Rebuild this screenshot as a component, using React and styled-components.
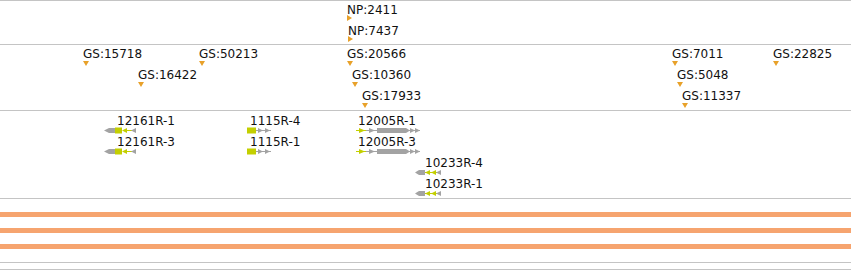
import React from 'react';
import styled, { createGlobalStyle } from 'styled-components';

const GlobalStyle = createGlobalStyle`
    html, body {
        margin: 0;
        padding: 0;
        background: #ffffff;
    }
    body {
        font-family: "DejaVu Sans", "Liberation Sans", sans-serif;
        font-size: 12px;
        color: #111111;
    }
`;

const GRAY = '#a3a3a3';
const GREEN = '#c3cf00';
const MARK = '#e8a12a';

// track tops (y of the border line) so feature coordinates can be read straight off the screen
const trackTop = { np: 0, gs: 44, gene: 110 };

const npFeatures = [
    { label: 'NP:2411', x: 347, y: 3 },
    { label: 'NP:7437', x: 348, y: 24 },
];

const gsFeatures = [
    { label: 'GS:15718', x: 83, y: 47 },
    { label: 'GS:50213', x: 199, y: 47 },
    { label: 'GS:20566', x: 347, y: 47 },
    { label: 'GS:7011', x: 672, y: 47 },
    { label: 'GS:22825', x: 773, y: 47 },
    { label: 'GS:16422', x: 138, y: 68 },
    { label: 'GS:10360', x: 352, y: 68 },
    { label: 'GS:5048', x: 677, y: 68 },
    { label: 'GS:17933', x: 362, y: 89 },
    { label: 'GS:11337', x: 682, y: 89 },
];

const genes = [
    { label: '12161R-1', x: 104, textX: 117, y: 114, kind: 'a' },
    { label: '12161R-3', x: 104, textX: 117, y: 135, kind: 'a' },
    { label: '1115R-4', x: 247, textX: 250, y: 114, kind: 'b' },
    { label: '1115R-1', x: 247, textX: 250, y: 135, kind: 'b' },
    { label: '12005R-1', x: 356, textX: 358, y: 114, kind: 'c' },
    { label: '12005R-3', x: 356, textX: 358, y: 135, kind: 'c' },
    { label: '10233R-4', x: 415, textX: 425, y: 156, kind: 'd' },
    { label: '10233R-1', x: 415, textX: 425, y: 177, kind: 'd' },
];

function GeneGlyph({ kind }) {
    switch (kind) {
        case 'a':
            return (
                <svg width="33" height="7" viewBox="0 0 33 7">
                    <polygon points="0,3.5 5,1 11,1 11,6 5,6" fill={GRAY} />
                    <rect x="11" y="0.5" width="7" height="6" fill={GREEN} />
                    <polygon points="18,3.5 23,1 23,6" fill={GREEN} />
                    <rect x="22" y="3" width="6" height="1" fill={GREEN} />
                    <polygon points="27,3.5 32,1 32,6" fill={GRAY} />
                </svg>
            );
        case 'b':
            return (
                <svg width="25" height="7" viewBox="0 0 25 7">
                    <rect x="0" y="0.5" width="9" height="6" fill={GREEN} />
                    <rect x="9" y="3" width="15" height="1" fill={GRAY} />
                    <polygon points="11,1 16,3.5 11,6" fill={GRAY} />
                    <polygon points="18,1 23,3.5 18,6" fill={GRAY} />
                </svg>
            );
        case 'c':
            return (
                <svg width="65" height="7" viewBox="0 0 65 7">
                    <rect x="0" y="3" width="11" height="1" fill={GREEN} />
                    <polygon points="3,1 9,3.5 3,6" fill={GREEN} />
                    <rect x="10" y="3" width="12" height="1" fill={GRAY} />
                    <polygon points="13,1 19,3.5 13,6" fill={GRAY} />
                    <polygon points="21,1 50,1 54,3.5 50,6 21,6" fill={GRAY} />
                    <rect x="50" y="3" width="14" height="1" fill={GRAY} />
                    <polygon points="54,1 59,3.5 54,6" fill={GRAY} />
                    <polygon points="59,1 64,3.5 59,6" fill={GRAY} />
                </svg>
            );
        default:
            return (
                <svg width="27" height="7" viewBox="0 0 27 7">
                    <polygon points="0,3.5 4,1 10,1 10,6 4,6" fill={GRAY} />
                    <rect x="10" y="3" width="12" height="1" fill={GREEN} />
                    <polygon points="10,3.5 15,1 15,6" fill={GREEN} />
                    <polygon points="16,3.5 21,1 21,6" fill={GREEN} />
                    <polygon points="21,3.5 26,1 26,6" fill={GRAY} />
                </svg>
            );
    }
}

function App() {
    return (
        <Browser>
            <GlobalStyle />
            <Track h={44}>
                {npFeatures.map(f => (
                    <Feature key={f.label} style={{ left: f.x, top: f.y - trackTop.np - 1 }}>
                        <Label>{f.label}</Label>
                        <RightMark />
                    </Feature>
                ))}
            </Track>
            <Track h={66}>
                {gsFeatures.map(f => (
                    <Feature key={f.label} style={{ left: f.x, top: f.y - trackTop.gs - 1 }}>
                        <Label>{f.label}</Label>
                        <DownMark />
                    </Feature>
                ))}
            </Track>
            <Track h={88}>
                {genes.map(g => (
                    <Feature key={g.label} style={{ left: g.x, top: g.y - trackTop.gene - 1 }}>
                        <Label style={{ marginLeft: g.textX - g.x }}>{g.label}</Label>
                        <GlyphRow>
                            <GeneGlyph kind={g.kind} />
                        </GlyphRow>
                    </Feature>
                ))}
            </Track>
            <BarTrack>
                <Bar />
                <Bar />
                <Bar />
            </BarTrack>
            <Track h={7} />
            <Track h={2} />
        </Browser>
    );
}

const Browser = styled.div`
    width: 851px;
    height: 270px;
    overflow: hidden;
    display: flex;
    flex-direction: column;
`

const Track = styled.div`
    position: relative;
    box-sizing: border-box;
    flex: none;
    height: ${props => props.h}px;
    border-top: 1px solid #c4c4c4;
`

const BarTrack = styled.div`
    box-sizing: border-box;
    flex: none;
    height: 64px;
    border-top: 1px solid #c4c4c4;
    padding-top: 13px;
    display: flex;
    flex-direction: column;
    gap: 11px;
`

const Bar = styled.div`
    height: 5px;
    background: #f6a46f;
`

const Feature = styled.div`
    position: absolute;
    display: flex;
    flex-direction: column;
    align-items: flex-start;
`

const Label = styled.span`
    display: block;
    font-family: "DejaVu Sans", "Liberation Sans", sans-serif;
    font-size: 12px;
    line-height: 14px;
    white-space: nowrap;
    color: #111111;
`

const RightMark = styled.div`
    width: 0;
    height: 0;
    margin-top: -2px;
    border-top: 3px solid transparent;
    border-bottom: 3px solid transparent;
    border-left: 5px solid ${MARK};
`

const DownMark = styled.div`
    width: 0;
    height: 0;
    margin-top: 0px;
    border-left: 3px solid transparent;
    border-right: 3px solid transparent;
    border-top: 5px solid ${MARK};
`

const GlyphRow = styled.div`
    display: flex;
    margin-top: -1px;
    line-height: 0;
`

export default App;
